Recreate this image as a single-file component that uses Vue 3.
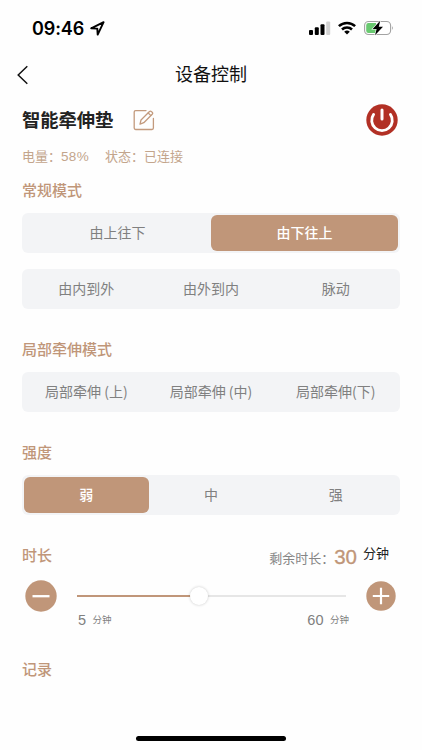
<template>
    <div class="page">
        <div class="status">
            <span class="status--time">09:46</span>
            <svg class="status--loc" width="15" height="15" viewBox="0 0 15 15">
                <path d="M1.2 7.3 L13.6 1.2 L7.7 13.6 L7.3 7.6 Z" fill="none" stroke="#000" stroke-width="1.9" stroke-linejoin="round" />
            </svg>
            <svg class="status--signal" width="22" height="14" viewBox="0 0 22 14">
                <rect x="0" y="9" width="4" height="5" rx="1" />
                <rect x="5.8" y="6.3" width="4" height="7.7" rx="1" />
                <rect x="11.5" y="3.2" width="4" height="10.8" rx="1" />
                <rect x="17.2" y="0.5" width="4" height="13.5" rx="1" fill="#d2d2d2" />
            </svg>
            <svg class="status--wifi" width="18" height="14" viewBox="0 0 18 14">
                <g fill="none" stroke="#000" stroke-width="2.5">
                    <path d="M0.9 5.2 A11.6 11.6 0 0 1 17.1 5.2" />
                    <path d="M4 8.5 A7.1 7.1 0 0 1 14 8.5" />
                </g>
                <path d="M6.2 10.8 A4 4 0 0 1 11.8 10.8 L9 13.6 Z" />
            </svg>
            <svg class="status--battery" width="30" height="16" viewBox="0 0 30 16">
                <rect x="0.6" y="1.5" width="26" height="13" rx="4" fill="#fff" stroke="#a3a3a3" stroke-width="1.1" />
                <path d="M4.6 3 H12 V13 H4.6 A2.3 2.3 0 0 1 2.2 10.7 V5.3 A2.3 2.3 0 0 1 4.6 3 Z" fill="#69c970" />
                <path d="M28 6 Q29.5 8 28 10 Z" fill="#888" />
                <path d="M16.2 0.8 L8.6 9 H12.6 L11 15.2 L19 6.8 H14.8 Z" stroke="#fff" stroke-width="1.2" paint-order="stroke" />
            </svg>
        </div>
        <div class="nav">
            <svg class="nav--back" width="12" height="20" viewBox="0 0 12 20">
                <path d="M10.3 1.2 L1.2 10 L10.3 18.8" fill="none" stroke="#111" stroke-width="1.5" />
            </svg>
            <span>设备控制</span>
        </div>

        <div class="content">
            <div class="device">
                <b>{{ name }}</b>
                <svg width="22" height="22" viewBox="0 0 22 22" fill="none" stroke="#c39a7d" stroke-width="1.3" stroke-linecap="round" stroke-linejoin="round">
                    <path d="M13 1.6 H2.6 Q1.2 1.6 1.2 3 V19.1 Q1.2 20.5 2.6 20.5 H19 Q20.4 20.5 20.4 19.1 V9.5" />
                    <path d="M7 15.2 L8 11 L16.5 2.5 Q17.5 1.7 18.6 2.7 L19.2 3.2 Q20.2 4.2 19.2 5.2 L10.8 13.7 Z" />
                    <path d="M15.2 4 L17.7 6.4" />
                </svg>
                <svg class="device--power" width="32" height="32" viewBox="0 0 32 32">
                    <circle cx="16" cy="16" r="15.7" fill="#b23025" />
                    <path d="M7.6 10.4 A10.3 10.3 0 1 0 24.4 10.4" fill="none" stroke="#fff" stroke-width="2.8" stroke-linecap="round" />
                    <path d="M16 6 V15" stroke="#fff" stroke-width="3" stroke-linecap="round" />
                </svg>
            </div>
            <div class="info">
                <span>电量：<i>{{ battery }}%</i></span>
                <span>状态：已连接</span>
            </div>

            <template v-for="group in groups" :key="group.title">
                <h2>{{ group.title }}</h2>
                <div v-for="(row, r) in group.rows" :key="r" class="seg">
                    <button v-for="item in row" :key="item" :class="{ active: group.active == item }" @click="group.active = item">{{ item }}</button>
                </div>
            </template>

            <div class="duration">
                <h2>时长</h2>
                <span class="duration--label">剩余时长：</span>
                <span class="duration--value">{{ time }}</span>
                <span class="duration--unit">分钟</span>
            </div>
            <div class="slider">
                <svg class="slider--minus" width="32" height="32" viewBox="0 0 32 32" @click="change(-1)">
                    <circle cx="16" cy="16" r="15.7" fill="#c09679" />
                    <path d="M7.5 16.2 H24.5" stroke="#fff" stroke-width="2.3" />
                </svg>
                <div class="track">
                    <div class="track--fill" :style="{ width: percent + '%' }"></div>
                    <div class="track--knob"></div>
                    <div class="track--rest"></div>
                </div>
                <svg class="slider--plus" width="30" height="30" viewBox="0 0 30 30" @click="change(1)">
                    <circle cx="15" cy="15" r="14.7" fill="#c09679" />
                    <path d="M6.8 15 H23.2 M15 6.8 V23.2" stroke="#fff" stroke-width="2.2" />
                </svg>
            </div>
            <div class="limits">
                <span>{{ min }}<small>分钟</small></span>
                <span>{{ max }}<small>分钟</small></span>
            </div>
            <h2 class="record">记录</h2>
        </div>
        <div class="home"></div>
    </div>
</template>
<script setup>
    import { ref, computed } from 'vue'

    const name = ref('智能牵伸垫')
    const battery = ref(58)
    const min = 5
    const max = 60
    const time = ref(30)

    const groups = ref([
        {
            title: '常规模式',
            active: '由下往上',
            rows: [['由上往下', '由下往上'], ['由内到外', '由外到内', '脉动']]
        },
        {
            title: '局部牵伸模式',
            active: '',
            rows: [['局部牵伸 (上)', '局部牵伸 (中)', '局部牵伸(下)']]
        },
        {
            title: '强度',
            active: '弱',
            rows: [['弱', '中', '强']]
        }
    ])

    // width of the filled part, the knob sits right after it
    const percent = computed(() => (time.value - min) / (max - min) * 93.5)
    const change = (step) => {
        time.value = Math.min(max, Math.max(min, time.value + step))
    }
</script>
<style>
    body {
        margin:0;
        background:#fefefe;
    }
</style>
<style scoped>
    .page {
        box-sizing:border-box;
        width:422px;
        height:750px;
        display:flex;
        flex-direction:column;
        overflow:hidden;
        background:#fefefe;
        font-family:"Liberation Sans", "Noto Sans CJK SC", sans-serif;
        color:#222;
    }
    .status {
        height:56px;
        display:flex;
        align-items:center;
        padding:0 28px 0 32px;
    }
    .status--time {
        font-family:Inter, sans-serif;
        font-weight:600;
        font-size:18px;
        width:52px;
        letter-spacing:-0.1px;
        white-space:nowrap;
        color:#000;
    }
    .status--loc {
        margin-left:6px;
    }
    .status--signal {
        margin-left:auto;
    }
    .status--wifi {
        margin-left:7px;
    }
    .status--battery {
        margin-left:8px;
    }
    .nav {
        height:38px;
        display:grid;
        grid-template-columns:1fr auto 1fr;
        align-items:center;
        padding:0 17px;
        font-size:18px;
        color:#111;
    }
    .nav span {
        line-height:24px;
    }
    .content {
        flex:1;
        padding:10px 22px 0;
    }
    .device {
        height:32px;
        display:flex;
        align-items:center;
    }
    .device b {
        width:111px;
        padding-top:2px;
        font-size:18.3px;
        font-weight:700;
        line-height:32px;
    }
    .device--power {
        margin-left:auto;
        margin-right:2px;
    }
    .info {
        display:flex;
        gap:16px;
        height:20px;
        margin-top:11px;
        line-height:20px;
        font-size:13px;
        color:#c3a58c;
    }
    .info i {
        font-style:normal;
        font-size:13.5px;
        letter-spacing:0.3px;
    }
    h2 {
        margin:28px 0 0;
        height:24px;
        line-height:24px;
        font-size:15px;
        font-weight:500;
        font-family:"Noto Sans CJK SC", sans-serif;
        color:#c09679;
    }
    .info + h2 {
        margin-top:11px;
    }
    .seg {
        box-sizing:border-box;
        display:flex;
        height:40px;
        margin-top:16px;
        padding:2px;
        border-radius:6px;
        background:#f3f4f6;
    }
    h2 + .seg {
        margin-top:11px;
    }
    .seg button {
        flex:1 1 0;
        margin:0;
        padding:0 0 2px;
        border:0;
        border-radius:6px;
        background:none;
        font-family:"Noto Sans CJK SC", sans-serif;
        font-size:14px;
        color:#808080;
        white-space:pre;
    }
    .seg button.active {
        background:#c09679;
        color:#fff;
        font-weight:500;
    }
    .duration {
        display:flex;
        height:24px;
        margin-top:28px;
        line-height:24px;
    }
    .duration h2 {
        margin:0;
    }
    .duration--label {
        margin-left:auto;
        padding-top:4px;
        font-size:13px;
        color:#858585;
    }
    .duration--value {
        padding-top:2px;
        font-size:20.5px;
        color:#c09679;
        -webkit-text-stroke:0.3px #c09679;
    }
    .duration--unit {
        margin:-1px 11px 0 6px;
        font-size:13px;
    }
    .slider {
        display:flex;
        align-items:center;
        height:32px;
        margin-top:13px;
        padding:0 4px 0 3px;
    }
    .track {
        flex:1;
        display:flex;
        align-items:center;
        height:20px;
        margin:0 20px;
    }
    .track--fill {
        height:2px;
        background:#c09679;
    }
    .track--knob {
        flex:none;
        width:18px;
        height:18px;
        margin:0 -1px;
        border-radius:50%;
        background:#fff;
        box-shadow:0 0 3px rgba(0,0,0,0.22);
        z-index:1;
    }
    .track--rest {
        flex:1;
        height:2px;
        background:#e6e6e6;
    }
    .limits {
        display:flex;
        justify-content:space-between;
        height:20px;
        margin-top:-2px;
        padding:0 51px 0 56px;
        line-height:20px;
        font-size:14.5px;
        letter-spacing:0.3px;
        color:#808080;
    }
    .limits small {
        margin-left:6px;
        font-size:9.5px;
        letter-spacing:0;
        vertical-align:2px;
    }
    .record {
        margin-top:27px;
    }
    .home {
        width:150px;
        height:5px;
        margin:0 auto 9px;
        border-radius:3px;
        background:#000;
    }
</style>
